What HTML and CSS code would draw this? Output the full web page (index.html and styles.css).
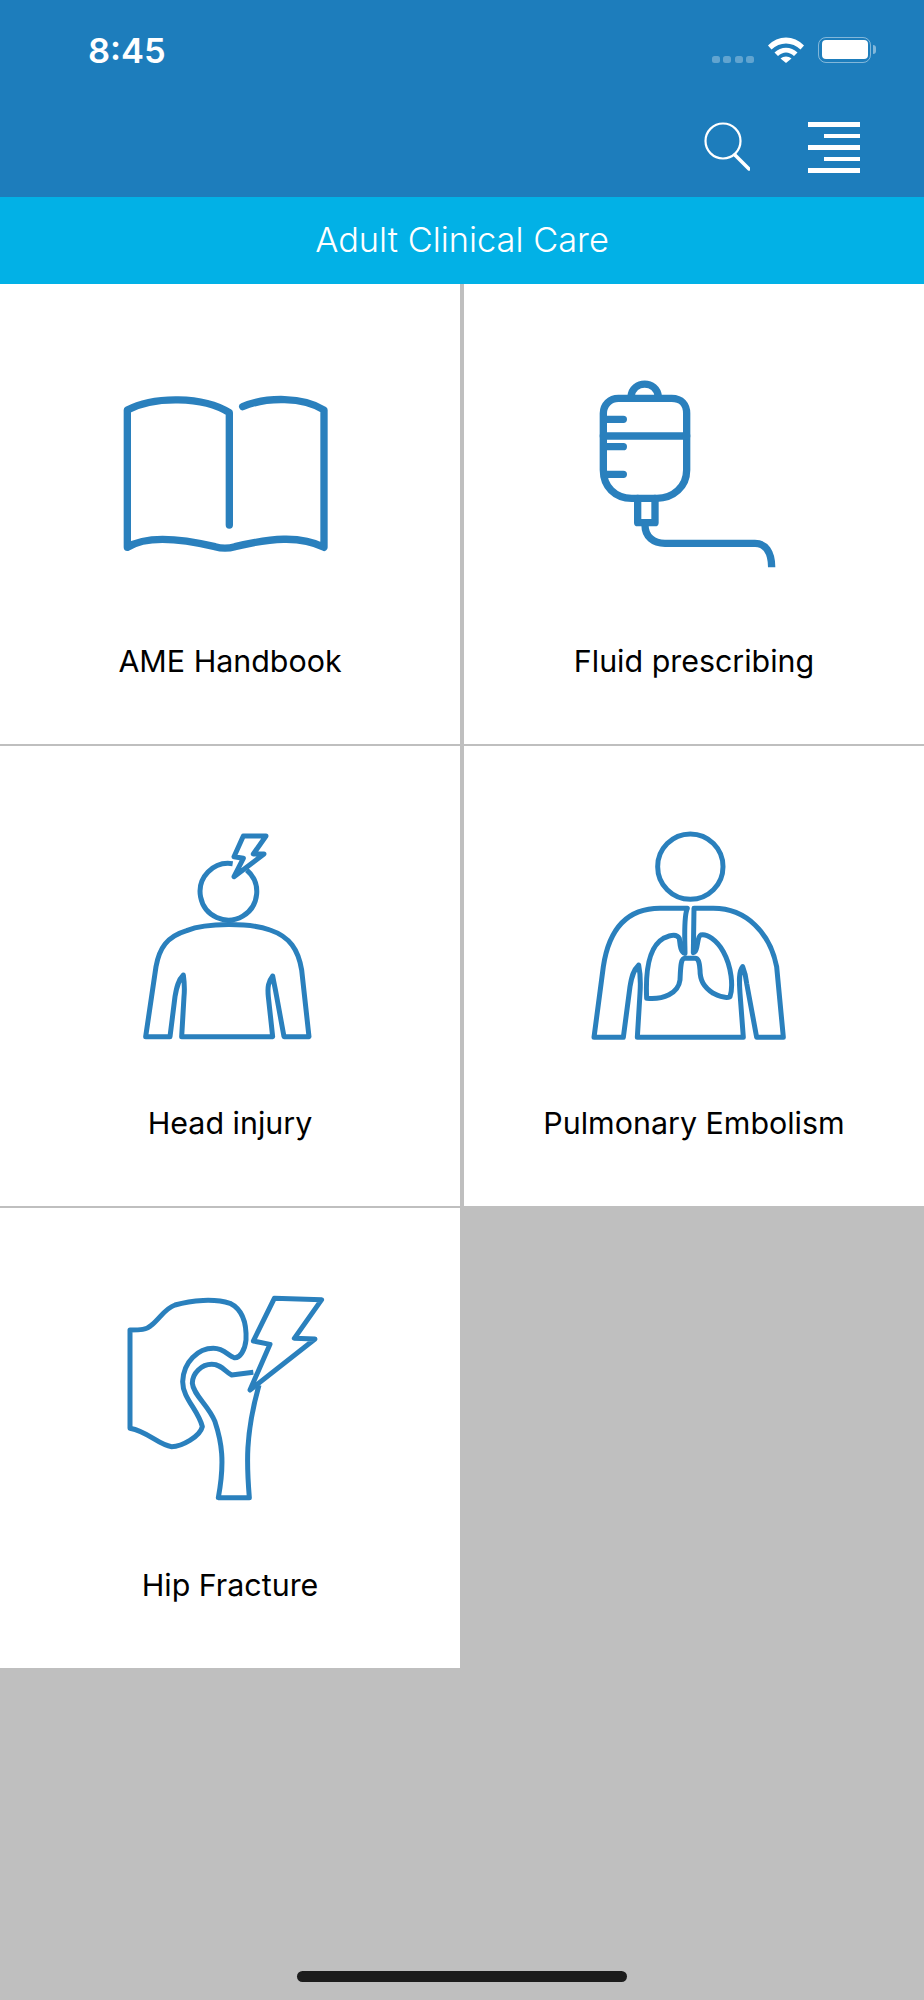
FILE: index.html
```html
<!DOCTYPE html>
<html lang="en">
<head>
    <meta charset="UTF-8">
    <meta name="viewport" content="width=device-width, initial-scale=1.0">
    <title>Adult Clinical Care</title>
    <link rel="stylesheet" href="styles.css">
</head>
<body>
    <div class="page">
        <header class="header">
            <div class="status">
                <span class="time">8:45</span>
                <div class="status-icons">
                    <div class="signal"><i></i><i></i><i></i><i></i></div>
                    <svg class="wifi" viewBox="0 0 36 26">
                        <path d="M0 8.5C10 -2.2 26 -2.2 36 8.500L32.500 12.500C24.500 4.500 11.500 4.500 3.500 12.500Z"/>
                        <path d="M6.500 15.500C13 9 23 9 29.500 15.500L26 19C21 14.300 15 14.300 10 19Z"/>
                        <path d="M12.500 21.500C15.500 18.700 20.500 18.700 23.500 21.500L18 26Z"/>
                    </svg>
                    <div class="battery"><div class="battery-fill"></div></div>
                    <div class="battery-nub"></div>
                </div>
            </div>
            <div class="nav">
                <svg class="search" viewBox="0 0 46 54">
                    <circle cx="19" cy="19" r="17.500"/>
                    <path class="search-handle" d="M31 33L45 47"/>
                </svg>
                <div class="menu">
                    <span></span>
                    <span class="short"></span>
                    <span></span>
                    <span class="short"></span>
                    <span></span>
                </div>
            </div>
        </header>

        <div class="subbar">Adult Clinical Care</div>

        <main class="grid">
            <div class="cell">
                <svg class="icon thick" viewBox="0 -30 780 720">
                    <path d="M388 465V128C310 78 160 78 82 120V532C140 495 240 505 345 530C365 536 385 536 405 530C510 505 600 495 672 532V120C610 80 500 80 428 110"/>
                </svg>
                <div class="label">AME Handbook</div>
            </div>
            <div class="cell">
                <svg class="icon thick" viewBox="-18 -30 780 720">
                    <path d="M145 85H305C335 85 350 105 350 130V300C350 350 310 385 260 385H185C135 385 100 350 100 300V130C100 105 120 85 145 85Z"/>
                    <path d="M183 80C187 30 261 30 265 80"/>
                    <path d="M100 198H350M105 148H160M105 230H160M105 313H160"/>
                    <path d="M203 385V458H255V385"/>
                    <path class="butt" d="M225 465C225 500 250 520 285 520H555C585 520 605 545 605 592"/>
                </svg>
                <div class="label">Fluid prescribing</div>
            </div>
            <div class="cell">
                <svg class="icon" viewBox="-90 6 780 720">
                    <path d="M350 150A85 85 0 1 1 308 131"/>
                    <path d="M340 48H408L370 102H402L312 170L340 115L312 110Z"/>
                    <path d="M47 650L78 440C88 385 110 350 170 332C230 308 360 308 420 330C480 350 505 390 515 450L537 650H462L440 530C435 500 430 480 428 468C415 485 412 500 415 530L428 650H155L162 530C165 500 162 480 160 465C145 480 140 500 135 530L120 650Z"/>
                </svg>
                <div class="label">Head injury</div>
            </div>
            <div class="cell">
                <svg class="icon" viewBox="-48 6 780 720">
                    <circle cx="331" cy="140" r="98"/>
                    <path d="M42 652L70 440C85 340 130 265 240 265H322C310 290 315 370 315 400C300 395 300 370 298 355C290 340 270 345 250 355C215 375 195 430 200 535C250 540 295 520 300 480C302 440 302 415 315 415H345C355 415 358 425 360 450C360 480 370 500 400 520C420 530 440 535 450 530C460 500 455 440 430 395C410 360 380 340 362 345C350 350 355 395 340 398L342 265H400C500 265 570 340 590 440L610 652H530L500 490C498 470 492 450 488 440C475 455 478 490 480 520L490 652H172L180 520C182 490 180 455 176 435C160 450 155 470 150 500L130 652Z"/>
                </svg>
                <div class="label">Pulmonary Embolism</div>
            </div>
            <div class="cell">
                <svg class="icon" viewBox="-45 -3 780 720">
                    <path d="M45 135C75 135 95 135 110 120C135 100 150 70 180 60C230 45 300 40 345 55C385 75 395 120 393 165C390 195 375 220 358 218C340 215 330 190 295 190C250 190 205 230 203 290C203 340 250 375 262 425C255 455 200 485 170 485C130 480 100 440 45 430Z"/>
                    <path d="M415 262L350 270C330 260 320 238 290 238C260 238 232 265 232 295C235 330 280 360 300 410C320 470 330 530 310 638H403C395 540 390 450 432 300"/>
                    <path d="M478 40L620 44L538 160L600 162L405 315L465 178L415 168Z"/>
                </svg>
                <div class="label">Hip Fracture</div>
            </div>
        </main>

        <div class="home-bar"></div>
    </div>
</body>
</html>
```

FILE: styles.css
```css
body {
    margin: 0;
    background-color: #bfbfbf;
    font-family: Inter, "Liberation Sans", sans-serif;
    color: #000;
}
.page {
    display: flex;
    flex-direction: column;
    min-height: 2000px;
}
.header {
    height: 197px;
    background-color: #1d7dbc;
    color: #fff;
}
.status {
    display: flex;
    justify-content: space-between;
    align-items: center;
    height: 37px;
    padding: 32px 48px 0 88px;
}
.time {
    font-size: 34.500px;
    font-weight: 600;
}
.status-icons {
    display: flex;
    align-items: center;
    margin-bottom: 2px;
}
.signal {
    display: flex;
    gap: 3.500px;
    margin: 19px 14px 0 0;
}
.signal i {
    width: 8px;
    height: 7px;
    border-radius: 2.500px;
    background-color: rgba(255, 255, 255, 0.3);
}
.wifi {
    width: 36px;
    height: 26px;
    fill: #fff;
}
.battery {
    box-sizing: border-box;
    width: 53px;
    height: 26px;
    margin-left: 14px;
    padding: 2.500px;
    border: 1.500px solid rgba(255, 255, 255, 0.45);
    border-radius: 8px;
}
.battery-fill {
    height: 100%;
    border-radius: 4px;
    background-color: #fff;
}
.battery-nub {
    width: 3px;
    height: 9px;
    margin-left: 2px;
    border-radius: 0 3px 3px 0;
    background-color: rgba(255, 255, 255, 0.45);
}
.nav {
    display: flex;
    justify-content: flex-end;
    gap: 58px;
    padding: 53px 64px 0 0;
}
.search {
    width: 46px;
    height: 54px;
    fill: none;
    stroke: #fff;
    stroke-width: 2.200;
}
.search-handle {
    stroke-width: 3.500;
    stroke-linecap: round;
}
.menu {
    display: flex;
    flex-direction: column;
    align-items: flex-end;
    gap: 7px;
    width: 52px;
}
.menu span {
    width: 100%;
    height: 4.500px;
    background-color: #fff;
}
.menu .short {
    width: 36px;
}
.subbar {
    height: 87px;
    line-height: 86px;
    background-color: #02b1e6;
    color: #fff;
    text-align: center;
    font-size: 34.400px;
    font-weight: 300;
}
.grid {
    display: grid;
    grid-template-columns: 460px 460px;
    grid-auto-rows: 460px;
    column-gap: 4px;
    row-gap: 2px;
}
.cell {
    display: flex;
    flex-direction: column;
    align-items: center;
    padding-top: 76px;
    box-sizing: border-box;
    background-color: #fff;
}
.icon {
    width: 260px;
    height: 240px;
    fill: none;
    stroke: #2a80bd;
    stroke-width: 15;
    stroke-linejoin: round;
}
.icon.thick {
    stroke-width: 22;
    stroke-linecap: round;
}
.icon .butt {
    stroke-linecap: butt;
}
.label {
    margin-top: 42px;
    line-height: 38px;
    font-size: 30.400px;
}
.home-bar {
    width: 330px;
    height: 11px;
    margin: auto auto 18px;
    border-radius: 6px;
    background-color: #1c1c1c;
}
```
